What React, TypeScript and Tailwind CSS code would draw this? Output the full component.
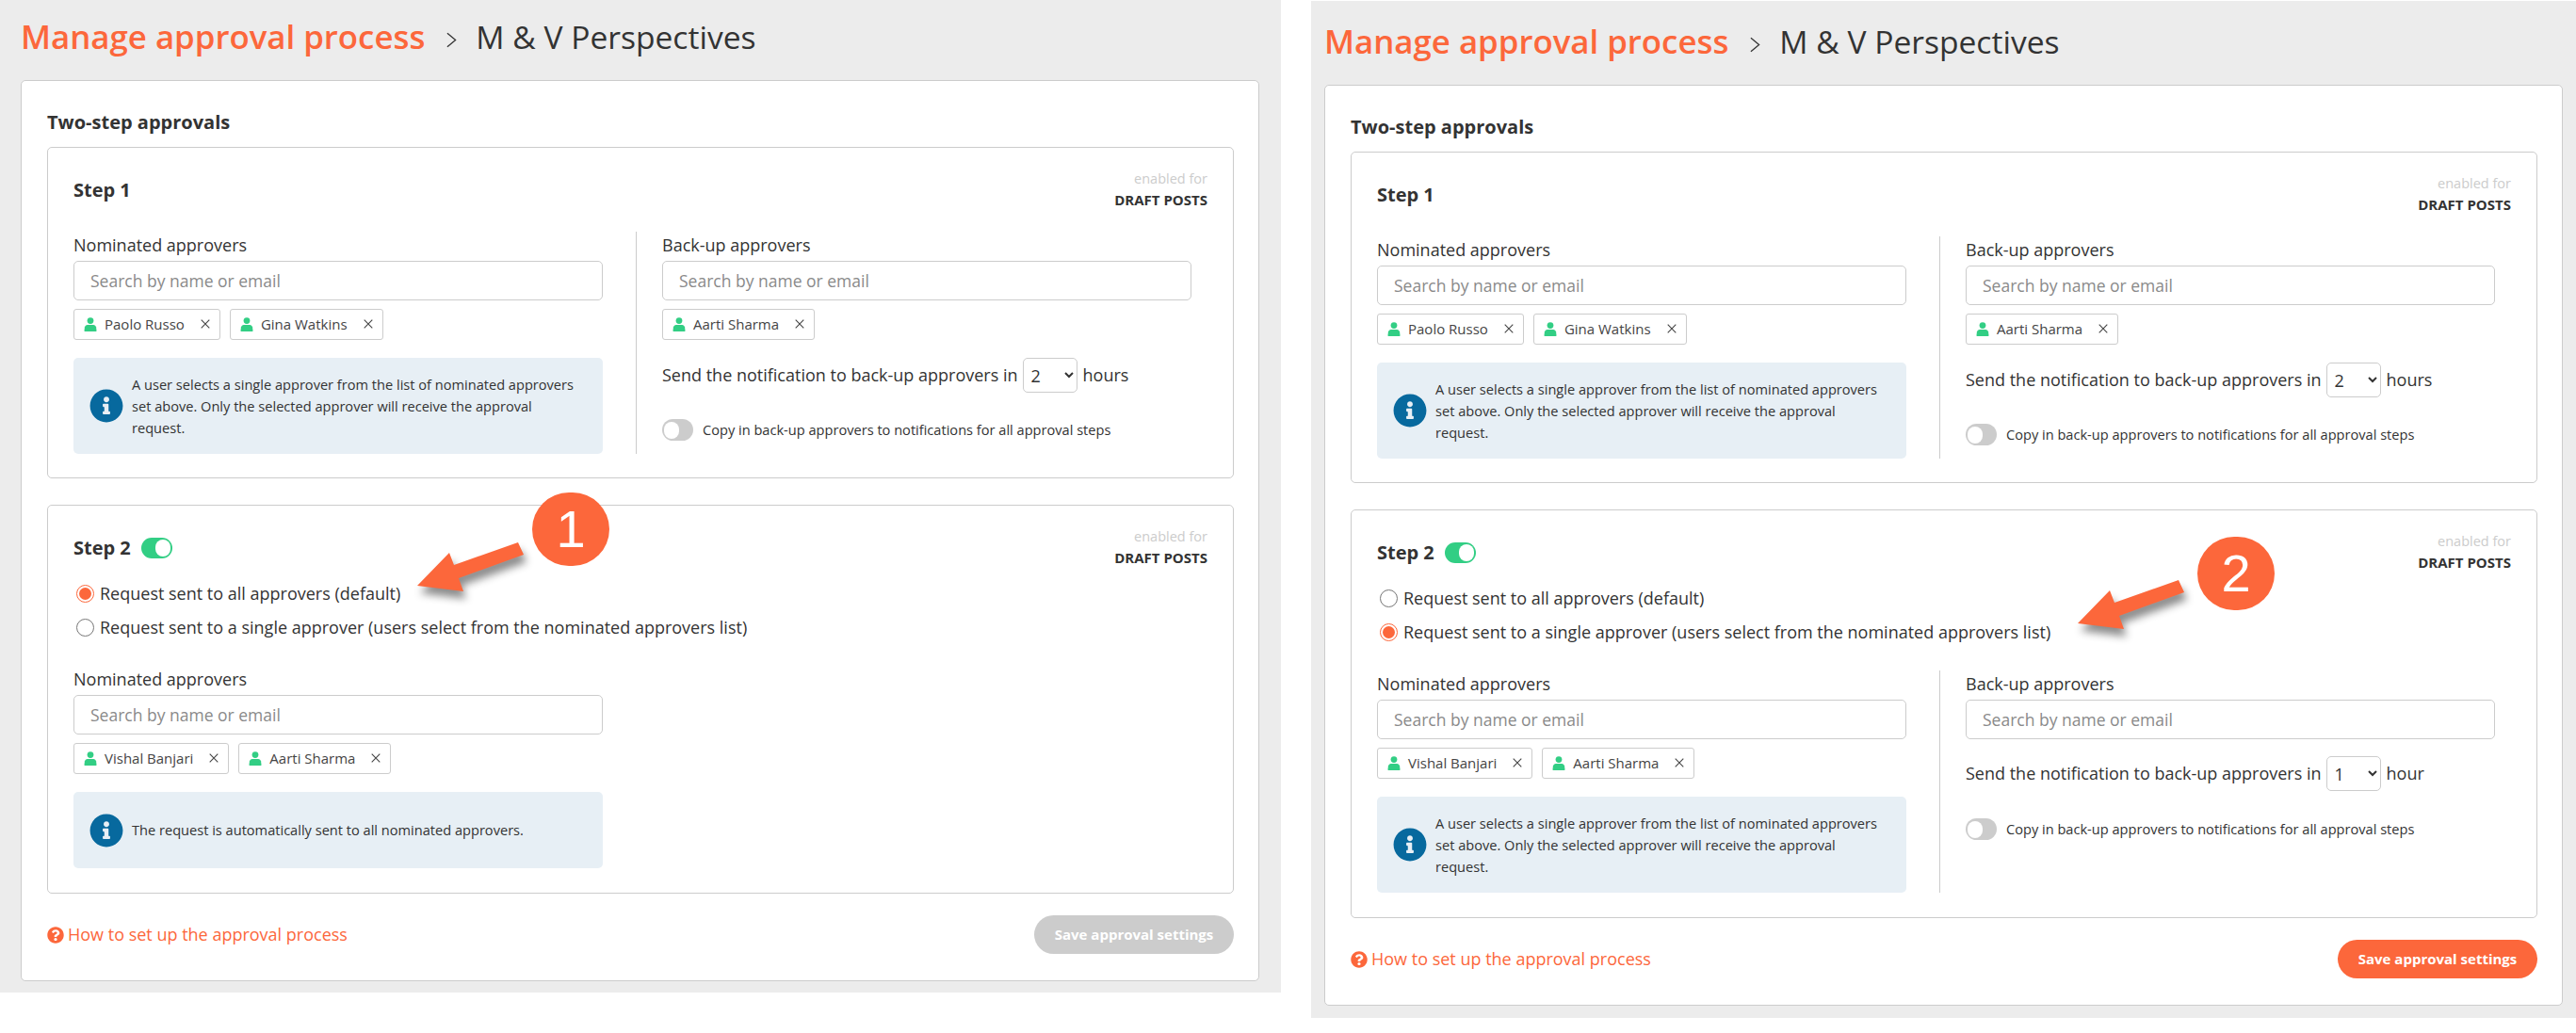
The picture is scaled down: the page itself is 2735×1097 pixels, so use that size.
import React from "react";
import { FaInfoCircle, FaQuestionCircle } from "react-icons/fa";

const ORANGE = "#FC673B";

function Person() {
  return (
    <svg viewBox="0 0 14 16" className="h-[15px] w-[14px] shrink-0" fill="#32CE84">
      <circle cx="7" cy="3.8" r="3.6" />
      <path d="M3.6 8.4h6.8c1.6 0 2.6 1 3 2.6l.6 4.2a.8.8 0 0 1-.8.8H.8a.8.8 0 0 1-.8-.8l.6-4.2c.4-1.6 1.4-2.6 3-2.6z" />
    </svg>
  );
}

function Chip({ name }: { name: string }) {
  return (
    <div className="flex h-[33px] items-center rounded-[3px] border border-[#ccc] pl-[10px] pr-[10px] text-[15px] text-[#444]">
      <Person />
      <span className="ml-[8px] whitespace-nowrap">{name}</span>
      <svg viewBox="0 0 10 10" className="ml-[17px] mb-[2px] h-[10px] w-[10px] shrink-0" stroke="#444" strokeWidth="1.1" fill="none">
        <path d="M.7.7l8.6 8.6M9.3.7L.7 9.3" />
      </svg>
    </div>
  );
}

function Search({ label, chips }: { label: string; chips?: string[] }) {
  return (
    <div>
      <div className="h-[28px] text-[18px] leading-[28px] text-[#333]">{label}</div>
      <input
        placeholder="Search by name or email"
        className="mt-[3px] block h-[42px] w-[562px] rounded-[5px] border border-[#ccc] bg-white px-[17px] text-[17.5px] text-[#333] outline-none placeholder:text-[#8a8a8a]"
      />
      {chips && (
        <div className="mt-[9px] flex gap-[10px]">
          {chips.map((c) => (
            <Chip key={c} name={c} />
          ))}
        </div>
      )}
    </div>
  );
}

function Info({ text, tall }: { text: React.ReactNode; tall?: boolean }) {
  return (
    <div className={`mt-[19px] flex items-center rounded-[5px] bg-[#E7EFF5] pl-[17px] ${tall ? "h-[102px]" : "h-[81px]"}`}>
      <FaInfoCircle className="h-[36px] w-[36px] shrink-0 text-[#07699E]" />
      <div className="ml-[9px] text-[14.6px] leading-[23px] text-[#333]">{text}</div>
    </div>
  );
}

const SINGLE = (
  <>
    A user selects a single approver from the list of nominated approvers
    <br />
    set above. Only the selected approver will receive the approval
    <br />
    request.
  </>
);

function Backup({ chips, value, unit }: { chips?: string[]; value: string; unit: string }) {
  return (
    <div className="ml-[35px] flex border-l border-[#ccc] pl-[27px]">
      <div>
        <Search label="Back-up approvers" chips={chips} />
        <div className={`flex h-[37px] items-center text-[18px] text-[#333] ${chips ? "mt-[19px]" : "mt-[18px]"}`}>
          <span>Send the notification to back-up approvers in</span>
          <select
            defaultValue={value}
            className="ml-[5px] h-[37px] w-[58px] rounded-[5px] border border-[#ccc] bg-white pl-[4px] text-[18px] text-[#333]"
          >
            <option>1</option>
            <option>2</option>
            <option>3</option>
          </select>
          <span className="ml-[6px]">{unit}</span>
        </div>
        <div className={`flex items-center ${chips ? "mt-[28px]" : "mt-[29px]"}`}>
          <div className="flex h-[23px] w-[33px] items-center rounded-full bg-[#ccc] pl-[2px]">
            <div className="h-[18px] w-[16px] rounded-full bg-white" />
          </div>
          <span className="ml-[10px] text-[14.6px] text-[#333]">Copy in back-up approvers to notifications for all approval steps</span>
        </div>
      </div>
    </div>
  );
}

function Radio({ on, label }: { on?: boolean; label: string }) {
  return (
    <div className="flex h-[36px] items-center pl-[3px]">
      <div className={`flex h-[19px] w-[19px] items-center justify-center rounded-full border ${on ? "border-[#FC673B]" : "border-[#777]"}`}>
        {on && <div className="h-[13px] w-[13px] rounded-full bg-[#FC673B]" />}
      </div>
      <span className="ml-[6px] whitespace-nowrap text-[18px] text-[#333]">{label}</span>
    </div>
  );
}

function Enabled() {
  return (
    <div className="text-right text-[15px] leading-[23px]">
      <div className="text-[14.5px] text-[#ccc]">enabled for</div>
      <div className="font-bold text-[#333]">DRAFT POSTS</div>
    </div>
  );
}

function Card({ second, active }: { second?: boolean; active?: boolean }) {
  return (
    <div className="ml-[22px] w-[1315px] rounded-[5px] border border-[#ccc] bg-white pb-[28px] pl-[27px] pr-[26px] pt-[30px]">
      <div className="h-[28px] text-[20px] font-bold leading-[28px] text-[#333]">Two-step approvals</div>
      <div className="mt-[12px] h-[352px] rounded-[5px] border border-[#ccc] px-[27px] pt-[21px]">
        <div className="flex items-center justify-between">
          <div className="mt-[2px] text-[20px] font-bold text-[#333]">Step 1</div>
          <Enabled />
        </div>
        <div className="mt-[22px] flex">
          <div>
            <Search label="Nominated approvers" chips={["Paolo Russo", "Gina Watkins"]} />
            <Info tall text={SINGLE} />
          </div>
          <Backup chips={["Aarti Sharma"]} value="2" unit="hours" />
        </div>
      </div>
      <div className="mt-[28px] rounded-[5px] border border-[#ccc] px-[27px] pb-[26px] pt-[21px]">
        <div className="flex items-center justify-between">
          <div className="mt-[2px] flex items-center">
            <div className="text-[20px] font-bold text-[#333]">Step 2</div>
            <div className="ml-[11px] flex h-[22px] w-[33px] items-center justify-end rounded-full bg-[#32CE84] pr-[2px]">
              <div className="h-[18px] w-[16px] rounded-full bg-white" />
            </div>
          </div>
          <Enabled />
        </div>
        <div className="mt-[8px]">
          <Radio on={!second} label="Request sent to all approvers (default)" />
          <Radio on={second} label="Request sent to a single approver (users select from the nominated approvers list)" />
        </div>
        <div className="mt-[23px] flex">
          <div>
            <Search label="Nominated approvers" chips={["Vishal Banjari", "Aarti Sharma"]} />
            {second ? <Info tall text={SINGLE} /> : <Info text="The request is automatically sent to all nominated approvers." />}
          </div>
          {second && <Backup value="1" unit="hour" />}
        </div>
      </div>
      <div className="mt-[23px] flex items-center justify-between">
        <a className="flex items-center text-[18px] text-[#FC673B]">
          <FaQuestionCircle className="h-[18px] w-[18px]" />
          <span className="ml-[4px]">How to set up the approval process</span>
        </a>
        <button className={`h-[41px] w-[212px] rounded-full text-[15px] font-bold text-white ${active ? "bg-[#FC673B]" : "bg-[#ccc]"}`}>
          Save approval settings
        </button>
      </div>
    </div>
  );
}

function Title() {
  return (
    <>
      <span className="text-[34.8px] font-semibold text-[#FC673B]">Manage approval process</span>
      <svg viewBox="0 0 12 18" className="ml-[23px] mt-[6px] h-[17px] w-[11px]" fill="none" stroke="#333" strokeWidth="1.4">
        <path d="M1 1l9.5 8L1 17" />
      </svg>
      <span className="ml-[20px] text-[33.6px] text-[#333]">M &amp; V Perspectives</span>
    </>
  );
}

function Arrow({ className }: { className: string }) {
  return (
    <svg viewBox="0 0 125 70" className={`absolute h-[70px] w-[125px] overflow-visible drop-shadow-[3px_8px_4px_rgba(0,0,0,0.45)] ${className}`}>
      <polygon points="8,52 42,17 47,30 115,6 121,19 52,44 57,58" fill={ORANGE} />
    </svg>
  );
}

function Bubble({ n, className }: { n: string; className: string }) {
  return (
    <div className={`absolute flex h-[78px] w-[82px] items-center justify-center rounded-full bg-[#FC673B] font-['Liberation_Sans',sans-serif] text-[56px] text-white ${className}`}>
      {n}
    </div>
  );
}

export default function App() {
  return (
    <div className="flex w-[2735px] items-start bg-white font-['Open_Sans',sans-serif]">
      <div className="relative h-[1054px] w-[1360px] bg-[#ECECEC]">
        <div className="flex h-[85px] items-center pb-[6px] pl-[22px]">
          <Title />
        </div>
        <Card />
        <Arrow className="left-[435px] top-[570px]" />
        <Bubble n="1" className="left-[565px] top-[523px]" />
      </div>
      <div className="relative ml-[32px] mt-px h-[1080px] w-[1343px] bg-[#ECECEC]">
        <div className="flex h-[89px] items-center pb-[2px]">
          <div className="flex items-center pl-[14px]">
            <Title />
          </div>
        </div>
        <div className="-ml-[8px]">
          <Card second active />
        </div>
        <Arrow className="left-[806px] top-[609px]" />
        <Bubble n="2" className="left-[941px] top-[569px]" />
      </div>
    </div>
  );
}
